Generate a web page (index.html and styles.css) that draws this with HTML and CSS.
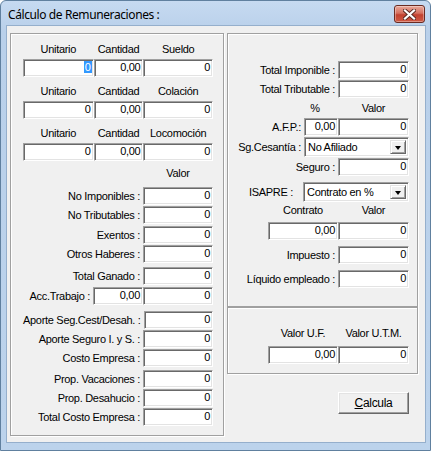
FILE: index.html
```html
<!DOCTYPE html>
<html lang="es">
<head>
  <meta charset="UTF-8">
  <title>Cálculo de Remuneraciones</title>
  <link rel="stylesheet" href="styles.css">
</head>
<body>
  <div class="window">
    <div class="titlebar">
      <span class="title">Cálculo de Remuneraciones :</span>
      <button class="close" title="Cerrar">
        <svg width="13" height="11" viewBox="0 0 13 11">
          <path d="M2 1.5 L11 9.5 M11 1.5 L2 9.5" stroke="#5a2a22" stroke-width="4" stroke-linecap="square"/>
          <path d="M2 1.5 L11 9.5 M11 1.5 L2 9.5" stroke="#fff" stroke-width="2.2" stroke-linecap="square"/>
        </svg>
      </button>
    </div>

    <div class="client">
      <!-- Columna izquierda -->
      <div class="group group-left">
        <div class="heads mt8">
          <span class="c1">Unitario</span><span class="c2">Cantidad</span><span class="c3">Sueldo</span>
        </div>
        <div class="trio mt3">
          <div class="field c1"><span class="sel">0</span></div>
          <div class="field c2">0,00</div>
          <div class="field c3">0</div>
        </div>

        <div class="heads mt7">
          <span class="c1">Unitario</span><span class="c2">Cantidad</span><span class="c3">Colación</span>
        </div>
        <div class="trio mt3">
          <div class="field c1">0</div>
          <div class="field c2">0,00</div>
          <div class="field c3">0</div>
        </div>

        <div class="heads mt7">
          <span class="c1">Unitario</span><span class="c2">Cantidad</span><span class="c3">Locomoción</span>
        </div>
        <div class="trio mt3">
          <div class="field c1">0</div>
          <div class="field c2">0,00</div>
          <div class="field c3">0</div>
        </div>

        <div class="heads heads-right mt5"><span class="c3">Valor</span></div>

        <div class="row mt7"><label>No Imponibles :</label><div class="field c3">0</div></div>
        <div class="row mt1"><label>No Tributables :</label><div class="field c3">0</div></div>
        <div class="row mt2"><label>Exentos :</label><div class="field c3">0</div></div>
        <div class="row mt1"><label>Otros Haberes :</label><div class="field c3">0</div></div>

        <div class="row mt4"><label>Total Ganado :</label><div class="field c3">0</div></div>
        <div class="row mt2"><label>Acc.Trabajo :</label><div class="field c2">0,00</div><div class="field c3">0</div></div>

        <div class="row mt6"><label>Aporte Seg.Cest/Desah. :</label><div class="field c3">0</div></div>
        <div class="row mt1"><label>Aporte Seguro I. y S. :</label><div class="field c3">0</div></div>
        <div class="row mt1"><label>Costo Empresa :</label><div class="field c3">0</div></div>

        <div class="row mt3"><label>Prop. Vacaciones :</label><div class="field c3">0</div></div>
        <div class="row mt1"><label>Prop. Desahucio :</label><div class="field c3">0</div></div>
        <div class="row mt1"><label>Total Costo Empresa :</label><div class="field c3">0</div></div>
      </div>

      <!-- Columna derecha -->
      <div class="side">
        <div class="group group-totals">
          <div class="row mt27"><label>Total Imponible :</label><div class="field w71">0</div></div>
          <div class="row mt1"><label>Total Tributable :</label><div class="field w71">0</div></div>

          <div class="heads heads-right mt3"><span class="pct">%</span><span class="w71">Valor</span></div>
          <div class="row mt3"><label>A.F.P.:</label><div class="field w34">0,00</div><div class="field w71">0</div></div>
          <div class="row mt2">
            <label>Sg.Cesantía :</label>
            <div class="combo"><span>No Afiliado</span><i class="drop"></i></div>
          </div>
          <div class="row mt2"><label>Seguro :</label><div class="field w71">0</div></div>

          <div class="row mt7">
            <label class="wide">ISAPRE :</label>
            <div class="combo combo-isapre"><span>Contrato en %</span><i class="drop"></i></div>
          </div>

          <div class="heads heads-right mt2"><span class="c3">Contrato</span><span class="w71">Valor</span></div>
          <div class="row mt5"><div class="field c3">0,00</div><div class="field w71">0</div></div>

          <div class="row mt6"><label>Impuesto :</label><div class="field w71">0</div></div>
          <div class="row mt6"><label>Líquido empleado :</label><div class="field w71">0</div></div>
        </div>

        <div class="group group-values">
          <div class="heads heads-right mt18"><span class="c3">Valor U.F.</span><span class="w71">Valor U.T.M.</span></div>
          <div class="row mt6"><div class="field c3">0,00</div><div class="field w71">0</div></div>
        </div>

        <div class="actions">
          <button class="btn"><u>C</u>alcula</button>
        </div>
      </div>
    </div>
  </div>
</body>
</html>
```

FILE: styles.css
```css
* {
  box-sizing: border-box;
}
body {
  margin: 0;
  font-family: 'Liberation Sans', Arial, sans-serif;
  font-size: 11px;
  letter-spacing: -0.3px;
  color: #000;
}
.window {
  width: 431px;
  height: 451px;
  background: linear-gradient(#c6daf1, #b9d0ea 30px, #bcd3ec);
  border: 1px solid #60809f;
  border-radius: 6px 6px 0 0;
  display: flex;
  flex-direction: column;
}
.titlebar {
  height: 25px;
  display: flex;
  align-items: center;
  justify-content: space-between;
  padding-left: 7px;
}
.title {
  font-family: 'Noto Sans', sans-serif;
  font-size: 12px;
  letter-spacing: -0.4px;
  margin-top: 1px;
}
.close {
  width: 31px;
  height: 18px;
  margin: 4px 5px 0 0;
  align-self: flex-start;
  padding: 0;
  border: 1px solid #6a2b22;
  border-radius: 3px;
  background: linear-gradient(#e9a99b, #d5705f 45%, #c2412f 55%, #cf5a44);
  box-shadow: inset 0 0 0 1px rgba(255,255,255,0.35);
  display: flex;
  align-items: center;
  justify-content: center;
}
.client {
  margin: 0 5px 0 6px;
  height: 416px;
  background: #f0f0f0;
  box-shadow: 0 0 0 1px #95afcc;
  padding: 7px 0 0 3px;
  display: flex;
  gap: 3px;
}

/* cajas de grupo */
.group {
  border: 1px solid #a0a0a0;
  box-shadow: inset 1px 1px 0 #fff, 1px 1px 0 #fff;
}
.group-left {
  width: 214px;
  height: 403px;
  padding: 0 10px 0 12px;
}
.side {
  width: 191px;
  display: flex;
  flex-direction: column;
}
.group-totals {
  height: 274px;
  padding-right: 8px;
}
.group-values {
  height: 67px;
  padding-right: 8px;
}
.actions {
  display: flex;
  justify-content: flex-end;
  padding-right: 9px;
  margin-top: 18px;
}

/* filas */
.heads {
  display: flex;
  height: 14px;
  line-height: 14px;
}
.heads span {
  text-align: center;
  white-space: nowrap;
}
.heads-right {
  justify-content: flex-end;
}
.trio {
  display: flex;
}
.row {
  display: flex;
  justify-content: flex-end;
  align-items: center;
  height: 18px;
}
.row label {
  margin-right: 3px;
  white-space: nowrap;
}
.row label.wide {
  margin-right: 10px;
}

.c1 { width: 71px; }
.c2 { width: 50px; }
.c3 { width: 70px; }
.w71 { width: 71px; }
.w34 { width: 34px; }
.pct {
  width: 34px;
  padding-right: 12px;
}

.field {
  height: 18px;
  line-height: 14px;
  background: #fff;
  text-align: right;
  padding-right: 2px;
  border-top: 1px solid #a0a0a0;
  border-left: 1px solid #a0a0a0;
  border-bottom: 1px solid #fff;
  border-right: 1px solid #fff;
  box-shadow: inset 1px 1px 0 #696969, inset -1px -1px 0 #e3e3e3;
}
.sel {
  background: #3399ff;
  color: #fff;
  padding: 0 1px;
  margin-right: -1px;
}

.combo {
  width: 105px;
  height: 20px;
  background: #fff;
  position: relative;
  padding: 2px 0 0 3px;
  line-height: 14px;
  border-top: 1px solid #a0a0a0;
  border-left: 1px solid #a0a0a0;
  border-bottom: 1px solid #fff;
  border-right: 1px solid #fff;
  box-shadow: inset 1px 1px 0 #696969, inset -1px -1px 0 #e3e3e3;
}
.combo-isapre {
  width: 106px;
}
.drop {
  position: absolute;
  right: 2px;
  top: 2px;
  width: 16px;
  height: 14px;
  background: #f0f0f0;
  border-top: 1px solid #e3e3e3;
  border-left: 1px solid #e3e3e3;
  border-bottom: 1px solid #696969;
  border-right: 1px solid #696969;
  box-shadow: inset 1px 1px 0 #fff, inset -1px -1px 0 #a0a0a0;
}
.drop::after {
  content: '';
  position: absolute;
  left: 4px;
  top: 5px;
  border-left: 3.5px solid transparent;
  border-right: 3.5px solid transparent;
  border-top: 4px solid #000;
}

.btn {
  width: 71px;
  height: 22px;
  font: inherit;
  letter-spacing: inherit;
  font-size: 12px;
  background: #f0f0f0;
  border-top: 1px solid #fff;
  border-left: 1px solid #fff;
  border-bottom: 1px solid #696969;
  border-right: 1px solid #696969;
  box-shadow: inset -1px -1px 0 #a0a0a0, inset 1px 1px 0 #e3e3e3;
  padding: 0;
}

.mt1 { margin-top: 1px; }
.mt2 { margin-top: 2px; }
.mt3 { margin-top: 3px; }
.mt4 { margin-top: 4px; }
.mt5 { margin-top: 5px; }
.mt6 { margin-top: 6px; }
.mt7 { margin-top: 7px; }
.mt8 { margin-top: 8px; }
.mt18 { margin-top: 18px; }
.mt27 { margin-top: 27px; }
```
